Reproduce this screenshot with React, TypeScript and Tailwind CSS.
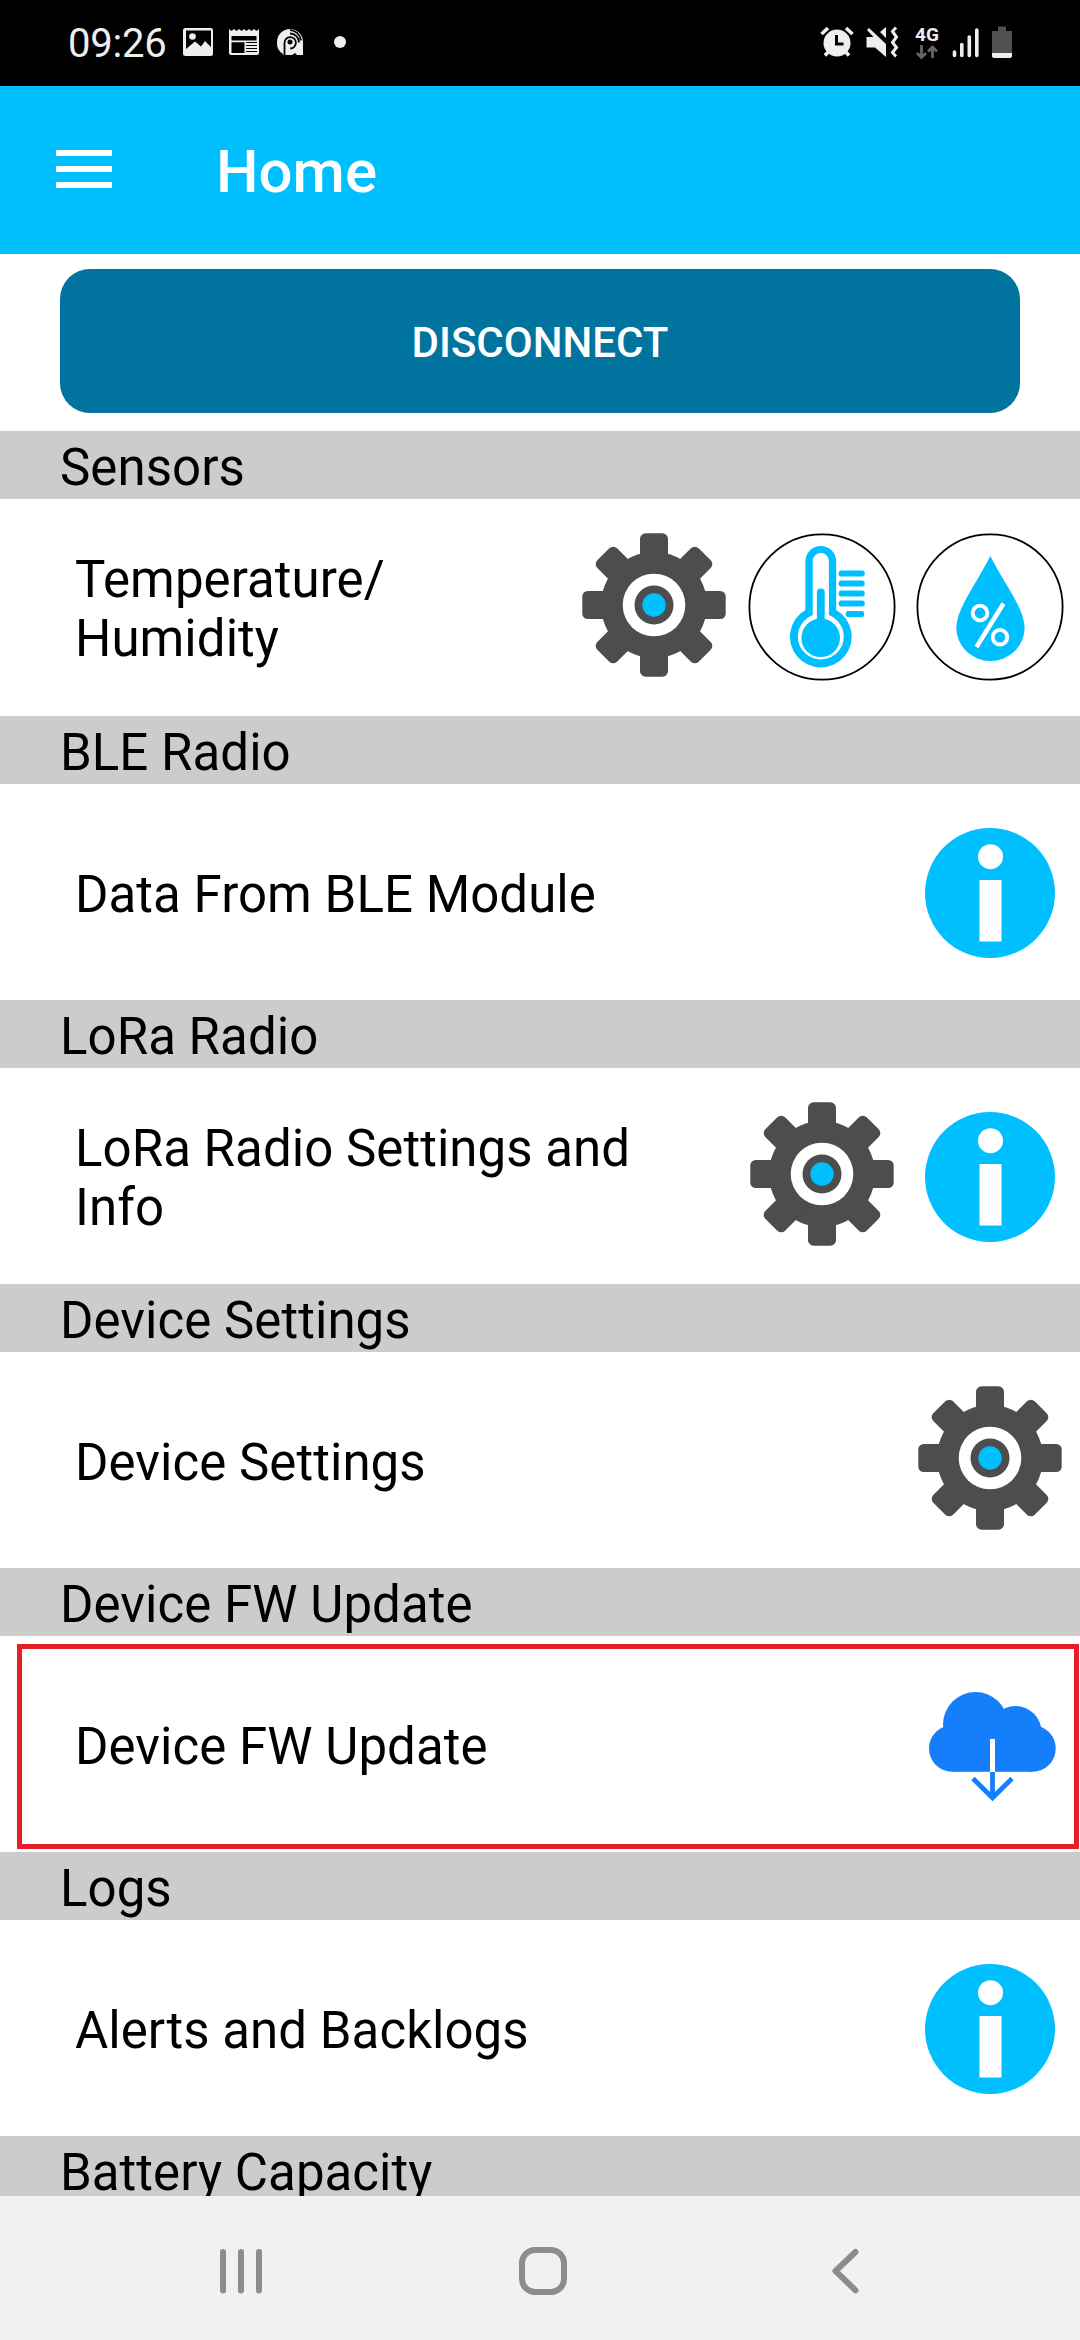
import React from "react";

const GearIcon = () => (
  <svg className="w-[144px] h-[144px] relative -top-[2px]" viewBox="-72 -72 144 144">
    <g fill="#4d4d4d">
      <circle r="53" />
      {[0, 45, 90, 135].map((angle) => (
        <rect
          key={angle}
          x="-14"
          y="-71.7"
          width="28"
          height="143.4"
          rx="5.5"
          transform={`rotate(${angle})`}
        />
      ))}
    </g>
    <circle r="31.3" fill="#fff" />
    <circle r="19.5" fill="#4d4d4d" />
    <circle r="11.7" fill="#00bfff" />
  </svg>
);

const InfoIcon = () => (
  <svg className="w-[130px] h-[130px] relative top-[0.5px]" viewBox="0 0 130 130">
    <circle cx="65" cy="65" r="65" fill="#00bfff" />
    <circle cx="65.5" cy="28.7" r="12.5" fill="#fff" />
    <rect x="54.5" y="52" width="22" height="61.5" fill="#fff" />
  </svg>
);

const ThermometerIcon = () => (
  <svg className="w-[148px] h-[148px] relative -top-[0.5px]" viewBox="748.3 532.5 148 148">
    <circle cx="822.3" cy="606.5" r="72.6" fill="#fff" stroke="#000" strokeWidth="1.8" />
    <g fill="#00bfff">
      <path d="M805.7 609.5V561a15.4 15.4 0 0 1 30.8 0v48.5a30.8 30.8 0 1 1-30.8 0z" />
      <path
        d="M813 614.5V560.5a8.1 8.1 0 0 1 16.2 0v54a23 23 0 1 1-16.2 0z"
        fill="#fff"
      />
      <circle cx="821" cy="637.3" r="19.3" />
      <rect x="817.2" y="588" width="7.8" height="40" rx="3.5" />
      <rect x="839" y="570" width="26" height="6" rx="2.5" />
      <rect x="839" y="580" width="26" height="6" rx="2.5" />
      <rect x="839" y="590" width="26" height="6" rx="2.5" />
      <rect x="839" y="600" width="26" height="6" rx="2.5" />
      <rect x="846" y="610.5" width="18.5" height="6" rx="2.5" />
    </g>
  </svg>
);

const HumidityIcon = () => (
  <svg className="w-[148px] h-[148px] relative -top-[0.5px]" viewBox="916 532.5 148 148">
    <circle cx="990" cy="606.5" r="72.6" fill="#fff" stroke="#000" strokeWidth="1.8" />
    <path
      d="M990.3 555.5C999 573 1013 593 1020 609c2.8 6.5 4.6 13 4.6 18.5a34 32.8 0 0 1-68.3 0c0-5.5 1.8-12 4.6-18.5C968 593 981.5 573 990.3 555.5z"
      fill="#00bfff"
    />
    <g fill="none" stroke="#fff">
      <circle cx="980" cy="612.5" r="7.3" strokeWidth="3.8" />
      <circle cx="1000" cy="636.7" r="7.3" strokeWidth="3.8" />
      <path d="M1003.5 603 976.5 646.5" strokeWidth="4.5" />
    </g>
  </svg>
);

const CloudDownloadIcon = () => (
  <svg className="w-[128px] h-[112px] relative left-[2px] top-[2px]" viewBox="928 1690 128 112">
    <g fill="#157efb">
      <circle cx="952.3" cy="1748.5" r="23.3" />
      <circle cx="975.5" cy="1724.5" r="32.5" />
      <circle cx="1015.5" cy="1732" r="26" />
      <circle cx="1032.4" cy="1748.5" r="23.3" />
      <rect x="952.3" y="1727" width="80.1" height="44.8" />
    </g>
    <path d="M992.5 1739v33" stroke="#fff" strokeWidth="5" />
    <path
      d="M992.5 1772v26M973 1778.5l19.5 19.3 19.5-19.3"
      fill="none"
      stroke="#157efb"
      strokeWidth="4.8"
    />
  </svg>
);

type SectionProps = {
  title: string;
  label: string;
  icons: React.ReactNode[];
  highlight?: boolean;
  first?: boolean;
};

const SectionTitle = ({ title }: { title: string }) => (
  <h2 className="h-[68px] shrink-0 bg-[#ccc] pl-[60px] pt-[7px] text-[51px] leading-[59px] tracking-[0.05px]">
    {title}
  </h2>
);

const Section = ({ title, label, icons, highlight, first }: SectionProps) => (
  <section className="shrink-0">
    <SectionTitle title={title} />
    <div
      className={`relative flex items-center justify-between pl-[75px] pr-[6px] ${
        first ? "h-[217px] pb-px" : "h-[216px]"
      }`}
    >
      <p className="whitespace-pre-line pt-[4px] text-[51px] leading-[59px] tracking-[0.05px]">
        {label}
      </p>
      <div className="flex">
        {icons.map((icon, i) => (
          <div key={i} className="flex w-[168px] items-center justify-center">
            {icon}
          </div>
        ))}
      </div>
      {highlight && (
        <div className="absolute left-[17px] right-px top-[8px] bottom-[3px] border-5 border-[#e61e25]" />
      )}
    </div>
  </section>
);

const StatusBar = () => (
  <div className="flex h-[86px] shrink-0 items-center justify-between bg-black text-[#eee]">
    <div className="flex items-center">
      <span className="ml-[68px] mt-[2px] w-[115px] text-[40px] leading-[48px] tracking-[-0.2px]">
        09:26
      </span>
      <svg className="h-[86px] w-[170px]" viewBox="183 0 170 86" fill="#eee">
        <path
          fillRule="evenodd"
          d="M185.5 28h25a2.5 2.5 0 0 1 2.5 2.5v23a2.5 2.5 0 0 1-2.5 2.5h-25a2.5 2.5 0 0 1-2.5-2.5v-23a2.5 2.5 0 0 1 2.5-2.5zM186 30.5V49l9-7.5 6 5 4-5.5 6 6V30.5z"
        />
        <circle cx="192.5" cy="36.5" r="3.3" />
        <path
          fillRule="evenodd"
          d="M229 29l2.5 2 2.5-2 2.5 2 2.5-2 2.5 2 2.5-2 2.5 2 2.5-2 2.5 2 2.5-2 2.5 2 2.5-2V53a2 2 0 0 1-2 2h-26a2 2 0 0 1-2-2zM231.5 36v4.5h25V36zM231.5 42.3V53h13V42.3z"
        />
        <path d="M246 42.5h11M246 45.5h11M246 48.5h11M246 51.5h11" stroke="#000" strokeWidth="1" />
        <path d="M277 42a13 13 0 1 1 26 0v13h-6l-2-2-3 2h-9v-1a13 13 0 0 1-6-12z" />
        <g fill="none" stroke="#000" strokeWidth="1.8">
          <path d="M284.5 55V43a5.7 5.7 0 1 1 5.7 5.5" />
          <path d="M290 33.5a9 9 0 0 1 9 9M290 29.8a12.5 12.5 0 0 1 11 10.5" />
        </g>
        <circle cx="290" cy="42" r="2.5" fill="#000" />
        <circle cx="340" cy="42" r="6" />
      </svg>
    </div>
    <div className="mr-[66px] flex items-center">
      <svg className="h-[86px] w-[82px]" viewBox="820 0 82 86" fill="#eee">
        <circle cx="837" cy="43" r="13.5" />
        <g fill="none" stroke="#eee" strokeWidth="3.6">
          <path d="M821.5 34l6.5-6M846 28l6.5 6" />
          <path d="M829 51l-4 4.5M845 51l4 4.5" />
        </g>
        <path d="M836.5 35v9h7" fill="none" stroke="#000" strokeWidth="3" />
        <path d="M866.5 37h7l-6.5-7 2-2 17 16v13l-11-9.5h-8.5zM880 32l6-5v11z" />
        <path
          d="M896 27.5l-3.5 4 4 5.5-4 5.5 4 5-4 5 3.5 4"
          fill="none"
          stroke="#eee"
          strokeWidth="3"
        />
      </svg>
      <div className="flex h-[86px] w-[42px] flex-col items-center pl-2 pt-[25px]">
        <span className="text-[19px] font-bold leading-[20px]">4G</span>
        <svg className="h-[15px] w-[22px]" viewBox="0 0 22 15">
          <path
            d="M5.5 0v12M1 8l4.5 4.5L10 8M16.5 13V2M12 6.5l4.5-4.5L21 6.5"
            fill="none"
            stroke="#666"
            strokeWidth="2.8"
          />
        </svg>
      </div>
      <svg className="h-[86px] w-[70px]" viewBox="944 0 70 86">
        <path
          d="M954.5 52v3.5M961.8 44.5v11M969.3 37v18.5M976.8 30v25.5"
          stroke="#eee"
          strokeWidth="3.6"
          strokeLinecap="round"
        />
        <path d="M992 31h6v-4.5h8V31h6v26h-20z" fill="#505050" />
        <path d="M992 53h20v3a2 2 0 0 1-2 2h-16a2 2 0 0 1-2-2z" fill="#eee" />
      </svg>
    </div>
  </div>
);

const NavBar = () => (
  <nav className="h-[144px] shrink-0 bg-[#f1f1f1]">
    <svg
      className="h-[144px] w-full"
      viewBox="0 2196 1080 144"
      fill="none"
      stroke="#8c8c8c"
      strokeWidth="6"
      strokeLinecap="round"
    >
      <path d="M223 2252v38.5M241 2252v38.5M259 2252v38.5" />
      <rect x="522" y="2250" width="42" height="42" rx="13" />
      <path d="M855.5 2252l-20 19 20 19.3" strokeLinejoin="round" />
    </svg>
  </nav>
);

const sections: SectionProps[] = [
  {
    title: "Sensors",
    label: "Temperature/\nHumidity",
    icons: [<GearIcon />, <ThermometerIcon />, <HumidityIcon />],
    first: true,
  },
  { title: "BLE Radio", label: "Data From BLE Module", icons: [<InfoIcon />] },
  {
    title: "LoRa Radio",
    label: "LoRa Radio Settings and\nInfo",
    icons: [<GearIcon />, <InfoIcon />],
  },
  { title: "Device Settings", label: "Device Settings", icons: [<GearIcon />] },
  {
    title: "Device FW Update",
    label: "Device FW Update",
    icons: [<CloudDownloadIcon />],
    highlight: true,
  },
  { title: "Logs", label: "Alerts and Backlogs", icons: [<InfoIcon />] },
];

const App = () => {
  return (
    <div className="flex h-[2340px] w-[1080px] flex-col overflow-hidden bg-white font-[Roboto,sans-serif] text-black">
      <StatusBar />
      <header className="flex h-[168px] shrink-0 items-center bg-[#00bfff] pl-[56px]">
        <button className="mb-[2px] flex w-[56px] flex-col gap-[10px]">
          <span className="h-[6px] bg-white" />
          <span className="h-[6px] bg-white" />
          <span className="h-[6px] bg-white" />
        </button>
        <h1 className="ml-[104px] mt-[4px] text-[60px] font-medium leading-[70px] text-white">
          Home
        </h1>
      </header>
      <main className="flex min-h-0 flex-1 flex-col overflow-hidden">
        <button className="mx-[60px] mt-[15px] mb-[18px] h-[144px] shrink-0 rounded-[30px] bg-[#00739f] pt-[2px] text-[42px] font-medium text-white">
          DISCONNECT
        </button>
        {sections.map((section) => (
          <Section key={section.title} {...section} />
        ))}
        <SectionTitle title="Battery Capacity" />
      </main>
      <NavBar />
    </div>
  );
};

export default App;
